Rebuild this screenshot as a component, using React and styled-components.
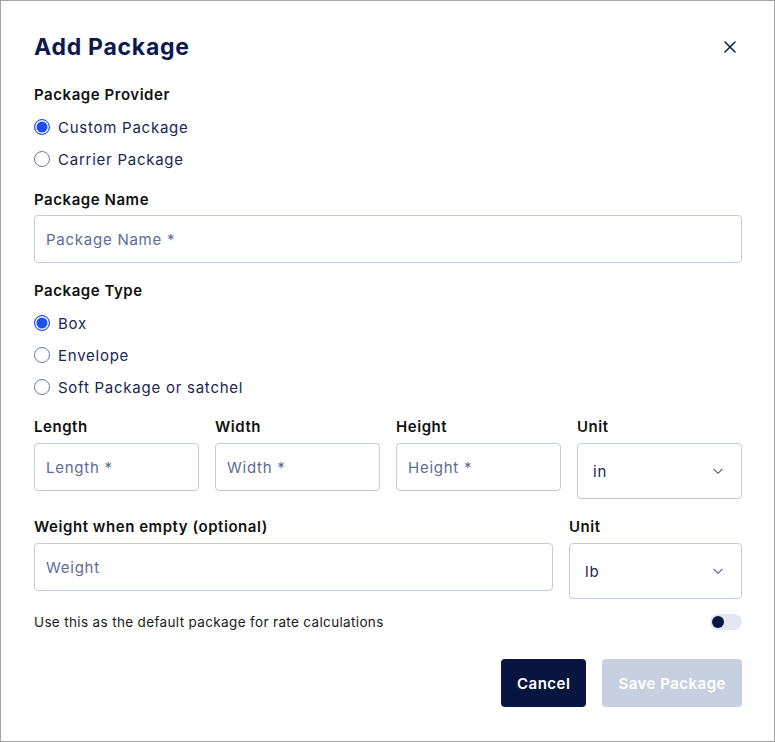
import React, { useState } from "react";
import styled, { createGlobalStyle } from "styled-components";

const GlobalStyle = createGlobalStyle`
  * { box-sizing: border-box; }
  body {
    margin: 0;
    background: #ffffff;
    font-family: Inter, "Noto Sans", sans-serif;
  }
`;

const Dialog = styled.div`
  width: 775px;
  height: 742px;
  border: 1px solid #a3a3a3;
  background: #ffffff;
  padding: 30px 32px 0 33px;
  display: flex;
  flex-direction: column;
`;

const Header = styled.div`
  display: flex;
  align-items: center;
  justify-content: space-between;
  height: 32px;
  margin-bottom: 21px;
`;

const Title = styled.h1`
  margin: 0;
  font-size: 23px;
  font-weight: 700;
  letter-spacing: 0.75px;
  color: #0c1a4b;
`;

const CloseButton = styled.button`
  border: 0;
  background: none;
  padding: 0;
  width: 24px;
  height: 24px;
  display: flex;
  align-items: center;
  justify-content: center;
  cursor: pointer;
`;

const Section = styled.div`
  display: flex;
  flex-direction: column;
  margin-bottom: ${(p) => p.$space || 0}px;
`;

const Label = styled.div`
  font-size: 15px;
  font-weight: 600;
  letter-spacing: 0.55px;
  color: #111111;
  height: 22px;
  line-height: 22px;
  margin-bottom: ${(p) => p.$gap ?? 5}px;
  white-space: nowrap;
`;

const RadioRow = styled.label`
  display: flex;
  align-items: center;
  gap: 8px;
  height: 32px;
  font-size: 15px;
  color: #1b2552;
  letter-spacing: 0.75px;
  cursor: pointer;
`;

const RadioDot = styled.span`
  width: 16px;
  height: 16px;
  border-radius: 50%;
  flex-shrink: 0;
  border: 1px solid ${(p) => (p.$on ? "#1d4ff5" : "#6c7aa8")};
  background: ${(p) => (p.$on ? "#1d4ff5" : "#ffffff")};
  box-shadow: ${(p) => (p.$on ? "inset 0 0 0 1.5px #ffffff" : "none")};
`;

const Input = styled.input`
  width: 100%;
  height: 48px;
  border: 1px solid #c3cbe0;
  border-radius: 4px;
  padding: 0 11px;
  font-family: inherit;
  font-size: 15px;
  color: #1b2552;
  outline: none;
  letter-spacing: 0.75px;
  &::placeholder {
    color: #5d6b99;
  }
`;

const Select = styled.div`
  height: 56px;
  border: 1px solid #c3cbe0;
  border-radius: 4px;
  padding: 0 16px 0 15px;
  display: flex;
  align-items: center;
  justify-content: space-between;
  font-size: 15px;
  letter-spacing: 0.75px;
  color: #1b2552;
`;

const Grid = styled.div`
  display: grid;
  grid-template-columns: ${(p) => p.$cols};
  column-gap: 16px;
  align-items: start;
  margin-bottom: ${(p) => p.$space || 0}px;
`;

const Field = styled.div`
  display: flex;
  flex-direction: column;
`;

const ToggleRow = styled.div`
  display: flex;
  align-items: center;
  justify-content: space-between;
  height: 18px;
  font-size: 13.5px;
  letter-spacing: 0.35px;
  color: #1a1a1a;
  margin-bottom: 28px;
`;

const Track = styled.span`
  width: 32px;
  height: 16px;
  border-radius: 8px;
  background: #e3e7f1;
  display: flex;
  align-items: center;
  padding: 0 2px;
  justify-content: ${(p) => (p.$on ? "flex-end" : "flex-start")};
  cursor: pointer;
`;

const Knob = styled.span`
  width: 12px;
  height: 12px;
  border-radius: 50%;
  background: #071540;
`;

const Footer = styled.div`
  display: flex;
  justify-content: flex-end;
  gap: 16px;
`;

const Button = styled.button`
  height: 48px;
  padding: 0 16px;
  border: 0;
  border-radius: 4px;
  font-family: inherit;
  font-size: 15px;
  font-weight: 600;
  letter-spacing: 0.5px;
  color: #ffffff;
  background: ${(p) => (p.$primary ? "#071540" : "#c7d0e1")};
  cursor: ${(p) => (p.$disabled ? "default" : "pointer")};
`;

const Chevron = () => (
  <svg width="14" height="14" viewBox="0 0 24 24" fill="none" stroke="#5d6b99" strokeWidth="2" strokeLinecap="round" strokeLinejoin="round">
    <path d="M5 9l7 7 7-7" />
  </svg>
);

const RadioGroup = ({ options, value, onChange }) => (
  <>
    {options.map((opt) => (
      <RadioRow key={opt} onClick={() => onChange(opt)}>
        <RadioDot $on={value === opt} />
        {opt}
      </RadioRow>
    ))}
  </>
);

export default function App() {
  const [provider, setProvider] = useState("Custom Package");
  const [type, setType] = useState("Box");
  const [isDefault, setIsDefault] = useState(false);

  return (
    <>
      <GlobalStyle />
      <Dialog>
        <Header>
          <Title>Add Package</Title>
          <CloseButton aria-label="Close">
            <svg width="12" height="12" viewBox="0 0 12 12" stroke="#0c1a4b" strokeWidth="1.5" strokeLinecap="round">
              <path d="M1 1l10 10M11 1L1 11" />
            </svg>
          </CloseButton>
        </Header>

        <Section $space={14}>
          <Label>Package Provider</Label>
          <RadioGroup options={["Custom Package", "Carrier Package"]} value={provider} onChange={setProvider} />
        </Section>

        <Section $space={17}>
          <Label $gap={4}>Package Name</Label>
          <Input placeholder="Package Name *" />
        </Section>

        <Section $space={13}>
          <Label>Package Type</Label>
          <RadioGroup options={["Box", "Envelope", "Soft Package or satchel"]} value={type} onChange={setType} />
        </Section>

        <Grid $cols="repeat(4, 1fr)" $space={17}>
          <Field>
            <Label>Length</Label>
            <Input placeholder="Length *" />
          </Field>
          <Field>
            <Label>Width</Label>
            <Input placeholder="Width *" />
          </Field>
          <Field>
            <Label>Height</Label>
            <Input placeholder="Height *" />
          </Field>
          <Field>
            <Label>Unit</Label>
            <Select>
              in
              <Chevron />
            </Select>
          </Field>
        </Grid>

        <Grid $cols="3fr 1fr" $space={14}>
          <Field>
            <Label>Weight when empty (optional)</Label>
            <Input placeholder="Weight" />
          </Field>
          <Field>
            <Label>Unit</Label>
            <Select>
              lb
              <Chevron />
            </Select>
          </Field>
        </Grid>

        <ToggleRow>
          Use this as the default package for rate calculations
          <Track $on={isDefault} onClick={() => setIsDefault(!isDefault)}>
            <Knob />
          </Track>
        </ToggleRow>

        <Footer>
          <Button $primary>Cancel</Button>
          <Button $disabled>Save Package</Button>
        </Footer>
      </Dialog>
    </>
  );
}
